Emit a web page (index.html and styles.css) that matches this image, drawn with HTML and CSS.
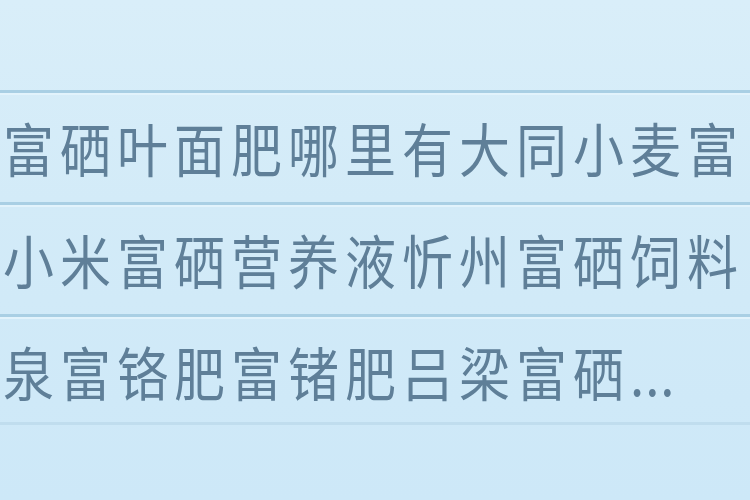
FILE: index.html
```html
<!DOCTYPE html>
<html lang="zh">
<head>
<meta charset="utf-8">
<link rel="stylesheet" href="styles.css">
</head>
<body>
<div class="list">
  <div class="row"><span class="txt">富硒叶面肥哪里有大同小麦富</span></div>
  <div class="row"><span class="txt">小米富硒营养液忻州富硒饲料</span></div>
  <div class="row"><span class="txt">泉富铬肥富锗肥吕梁富硒<span class="dots">...</span></span></div>
  <div class="end"></div>
</div>
</body>
</html>
```
FILE: styles.css
```css
html, body {
  margin: 0;
  padding: 0;
  width: 750px;
  height: 500px;
  overflow: hidden;
}
body {
  background: linear-gradient(180deg, #d9eef9 0%, #d3ebf8 40%, #cde8f8 100%);
  font-family: "Noto Sans CJK SC", "Noto Sans", sans-serif;
}
.list {
  padding-top: 90px;
}
.row {
  height: 109px;
  border-top: 3px solid #a9cfe4;
  box-shadow: inset 0 2px 0 #e2f3fc;
  display: flex;
  align-items: center;
  padding-left: 3px;
  font-size: 51px;
  letter-spacing: 6px;
  color: #5f7f98;
  white-space: nowrap;
  overflow: hidden;
  line-height: 1;
}
.txt {
  display: inline-block;
  transform: scaleY(1.13);
  transform-origin: 50% 45%;
}
.dots {
  letter-spacing: 1px;
}
.end {
  height: 0;
  margin-top: -4px;
  border-top: 3px solid #c0ddee;
}
```
